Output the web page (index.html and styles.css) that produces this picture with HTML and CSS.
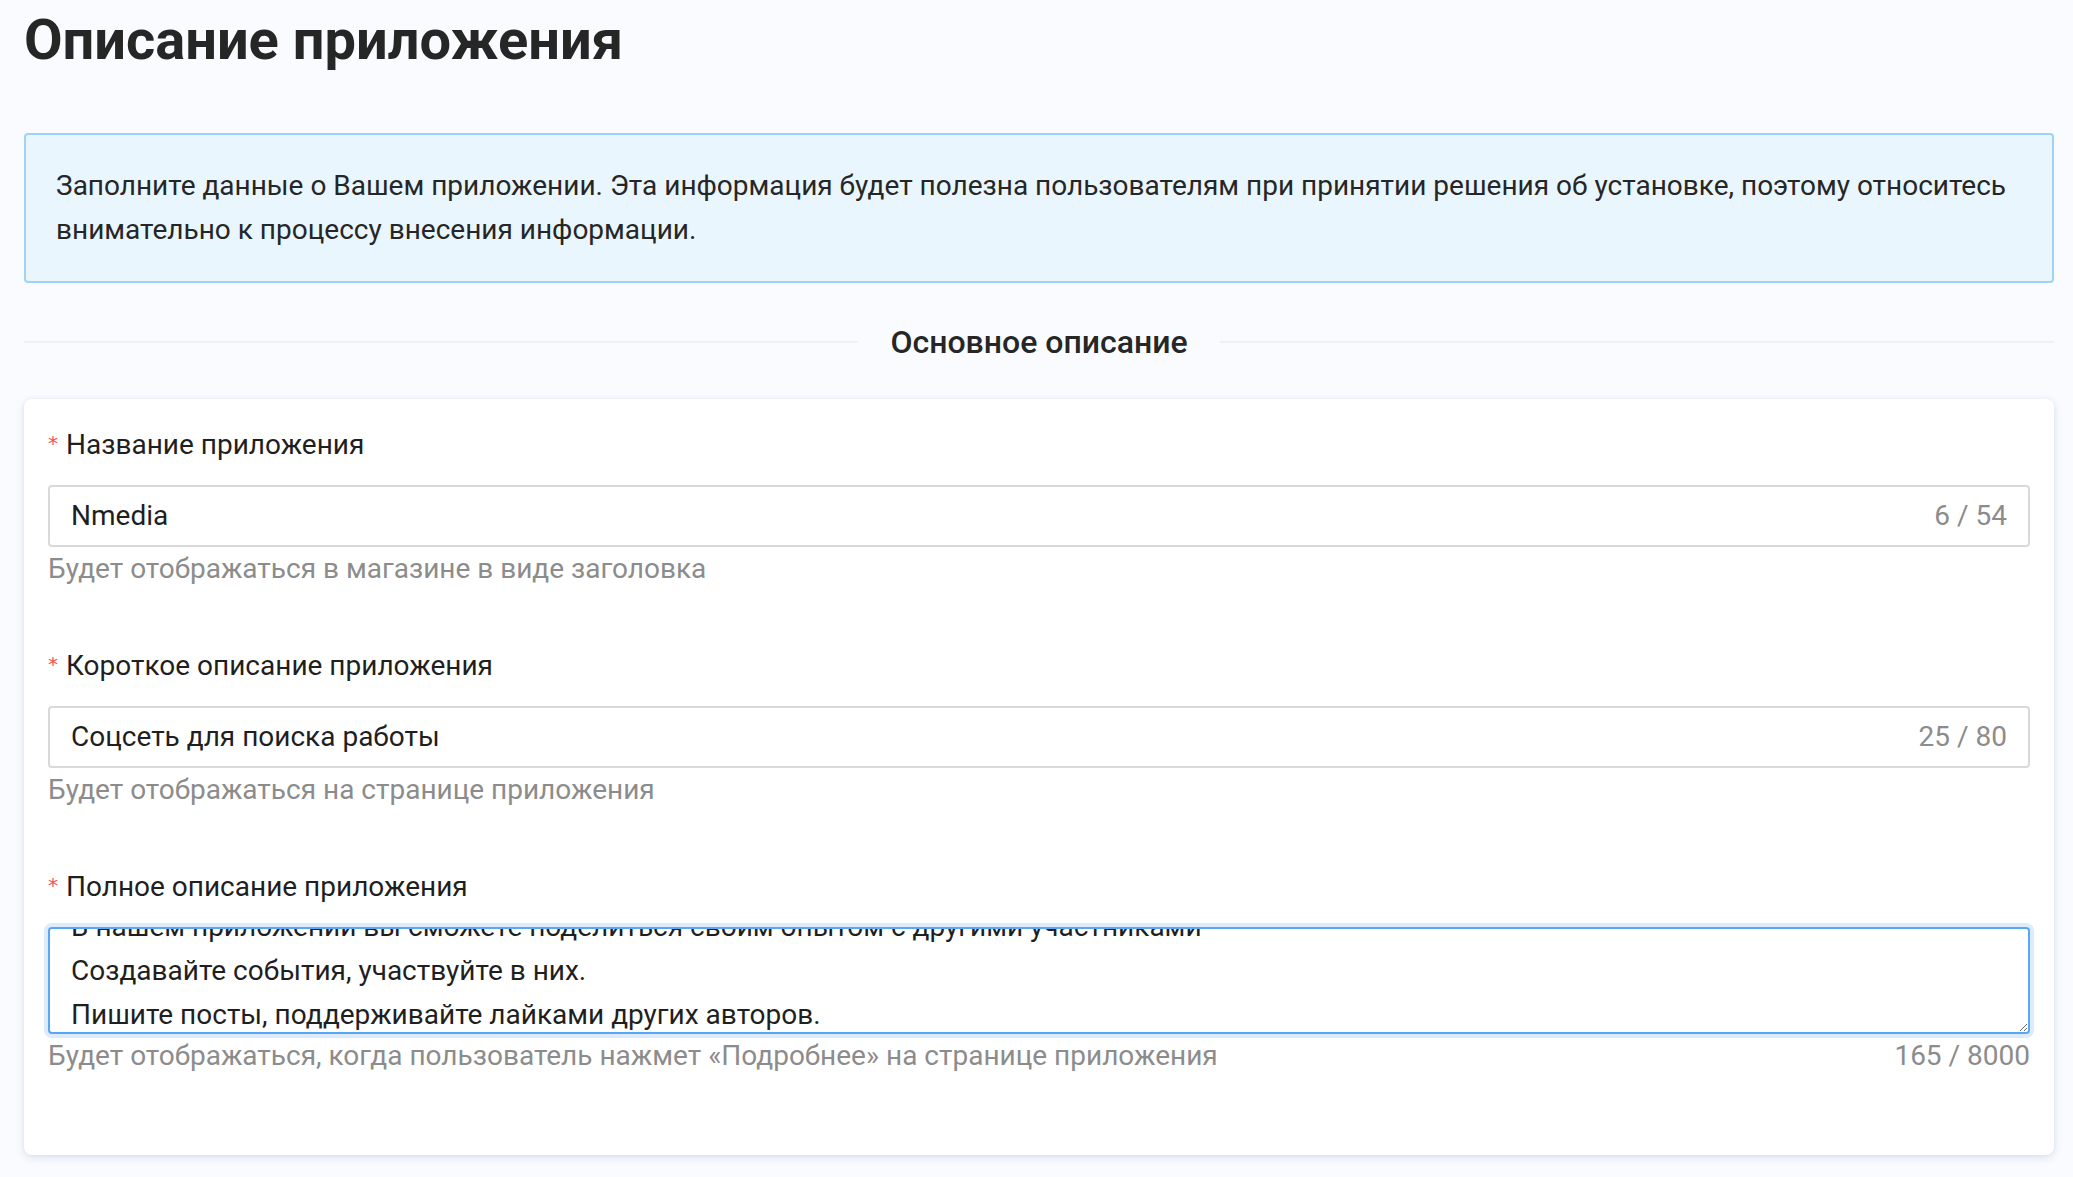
FILE: index.html
```html
<!DOCTYPE html>
<html lang="ru">
<head>
<meta charset="utf-8">
<title>Описание приложения</title>
<link rel="stylesheet" href="styles.css">
</head>
<body>
<main class="page">
  <h1 class="title">Описание приложения</h1>

  <div class="info">Заполните данные о Вашем приложении. Эта информация будет полезна пользователям при принятии решения об установке, поэтому относитесь внимательно к процессу внесения информации.</div>

  <div class="divider"><span class="divider-text">Основное описание</span></div>

  <section class="card">
    <div class="item">
      <label class="label"><span class="req">*</span>Название приложения</label>
      <div class="input">
        <span class="value">Nmedia</span>
        <span class="count">6 / 54</span>
      </div>
      <div class="explain">Будет отображаться в магазине в виде заголовка</div>
    </div>

    <div class="item">
      <label class="label"><span class="req">*</span>Короткое описание приложения</label>
      <div class="input">
        <span class="value">Соцсеть для поиска работы</span>
        <span class="count">25 / 80</span>
      </div>
      <div class="explain">Будет отображаться на странице приложения</div>
    </div>

    <div class="item">
      <label class="label"><span class="req">*</span>Полное описание приложения</label>
      <textarea class="textarea" id="full" spellcheck="false">В нашем приложении вы сможете поделиться своим опытом с другими участниками
Создавайте события, участвуйте в них.
Пишите посты, поддерживайте лайками других авторов.</textarea>
      <div class="explain explain-row"><span>Будет отображаться, когда пользователь нажмет «Подробнее» на странице приложения</span><span>165 / 8000</span></div>
    </div>
  </section>
</main>
<script src="script.js"></script>
</body>
</html>
```

FILE: styles.css
```css
* { box-sizing: border-box; }

html, body {
  margin: 0;
  padding: 0;
  background: #f9fbfe;
}

body {
  font-family: Roboto, "Noto Sans", Arial, sans-serif;
  color: #262626;
  font-size: 28px;
  line-height: 44px;
}

.page {
  padding: 0 19px 24px 24px;
}

.title {
  margin: 7px 0 0;
  font-size: 56px;
  line-height: 66px;
  font-weight: 700;
  color: #262626;
}

.info {
  margin-top: 60px;
  background: #eaf6fe;
  border: 2px solid #9dd3f7;
  border-radius: 4px;
  padding: 29px 30px;
  color: #262626;
}

.divider {
  display: flex;
  align-items: center;
  margin: 37px 0 35px;
  height: 44px;
}

.divider::before,
.divider::after {
  content: "";
  flex: 1;
  border-top: 2px solid #eef0f4;
}

.divider-text {
  padding: 0 32px;
  font-size: 32px;
  font-weight: 500;
  color: #262626;
  line-height: 44px;
}

.card {
  background: #ffffff;
  border-radius: 8px;
  box-shadow: 0 3px 8px rgba(70, 95, 170, 0.15), 0 0 4px rgba(70, 95, 170, 0.07);
  padding: 24px 24px 24px 24px;
}

.item {
  margin-bottom: 53px;
}

.label {
  display: block;
  margin-bottom: 18px;
  color: #1f1f1f;
  line-height: 44px;
}

.req {
  color: #ff4d4f;
  font-family: SimSun, "DejaVu Sans", sans-serif;
  font-size: 20px;
  line-height: 0;
  margin-right: 8px;
  vertical-align: 4px;
}

.input {
  display: flex;
  align-items: center;
  justify-content: space-between;
  height: 62px;
  border: 2px solid #d9d9d9;
  border-radius: 4px;
  padding: 0 21px;
  background: #fff;
}

.value {
  color: #1f1f1f;
}

.count {
  color: #8c8c8c;
}

.explain {
  color: #8c8c8c;
  line-height: 44px;
  min-height: 44px;
}

.explain-row {
  display: flex;
  justify-content: space-between;
}

.textarea {
  display: block;
  width: 100%;
  height: 107px;
  margin: 0;
  font: inherit;
  line-height: 44px;
  color: #1f1f1f;
  padding: 8px 21px;
  border: 2px solid #5aa6f6;
  border-radius: 4px;
  box-shadow: 0 0 0 4px #dcebfd;
  outline: none;
  resize: vertical;
  overflow: hidden;
  background: #fff;
}
```

FILE: script.js
```js
document.getElementById('full').scrollTop = 32;
```
